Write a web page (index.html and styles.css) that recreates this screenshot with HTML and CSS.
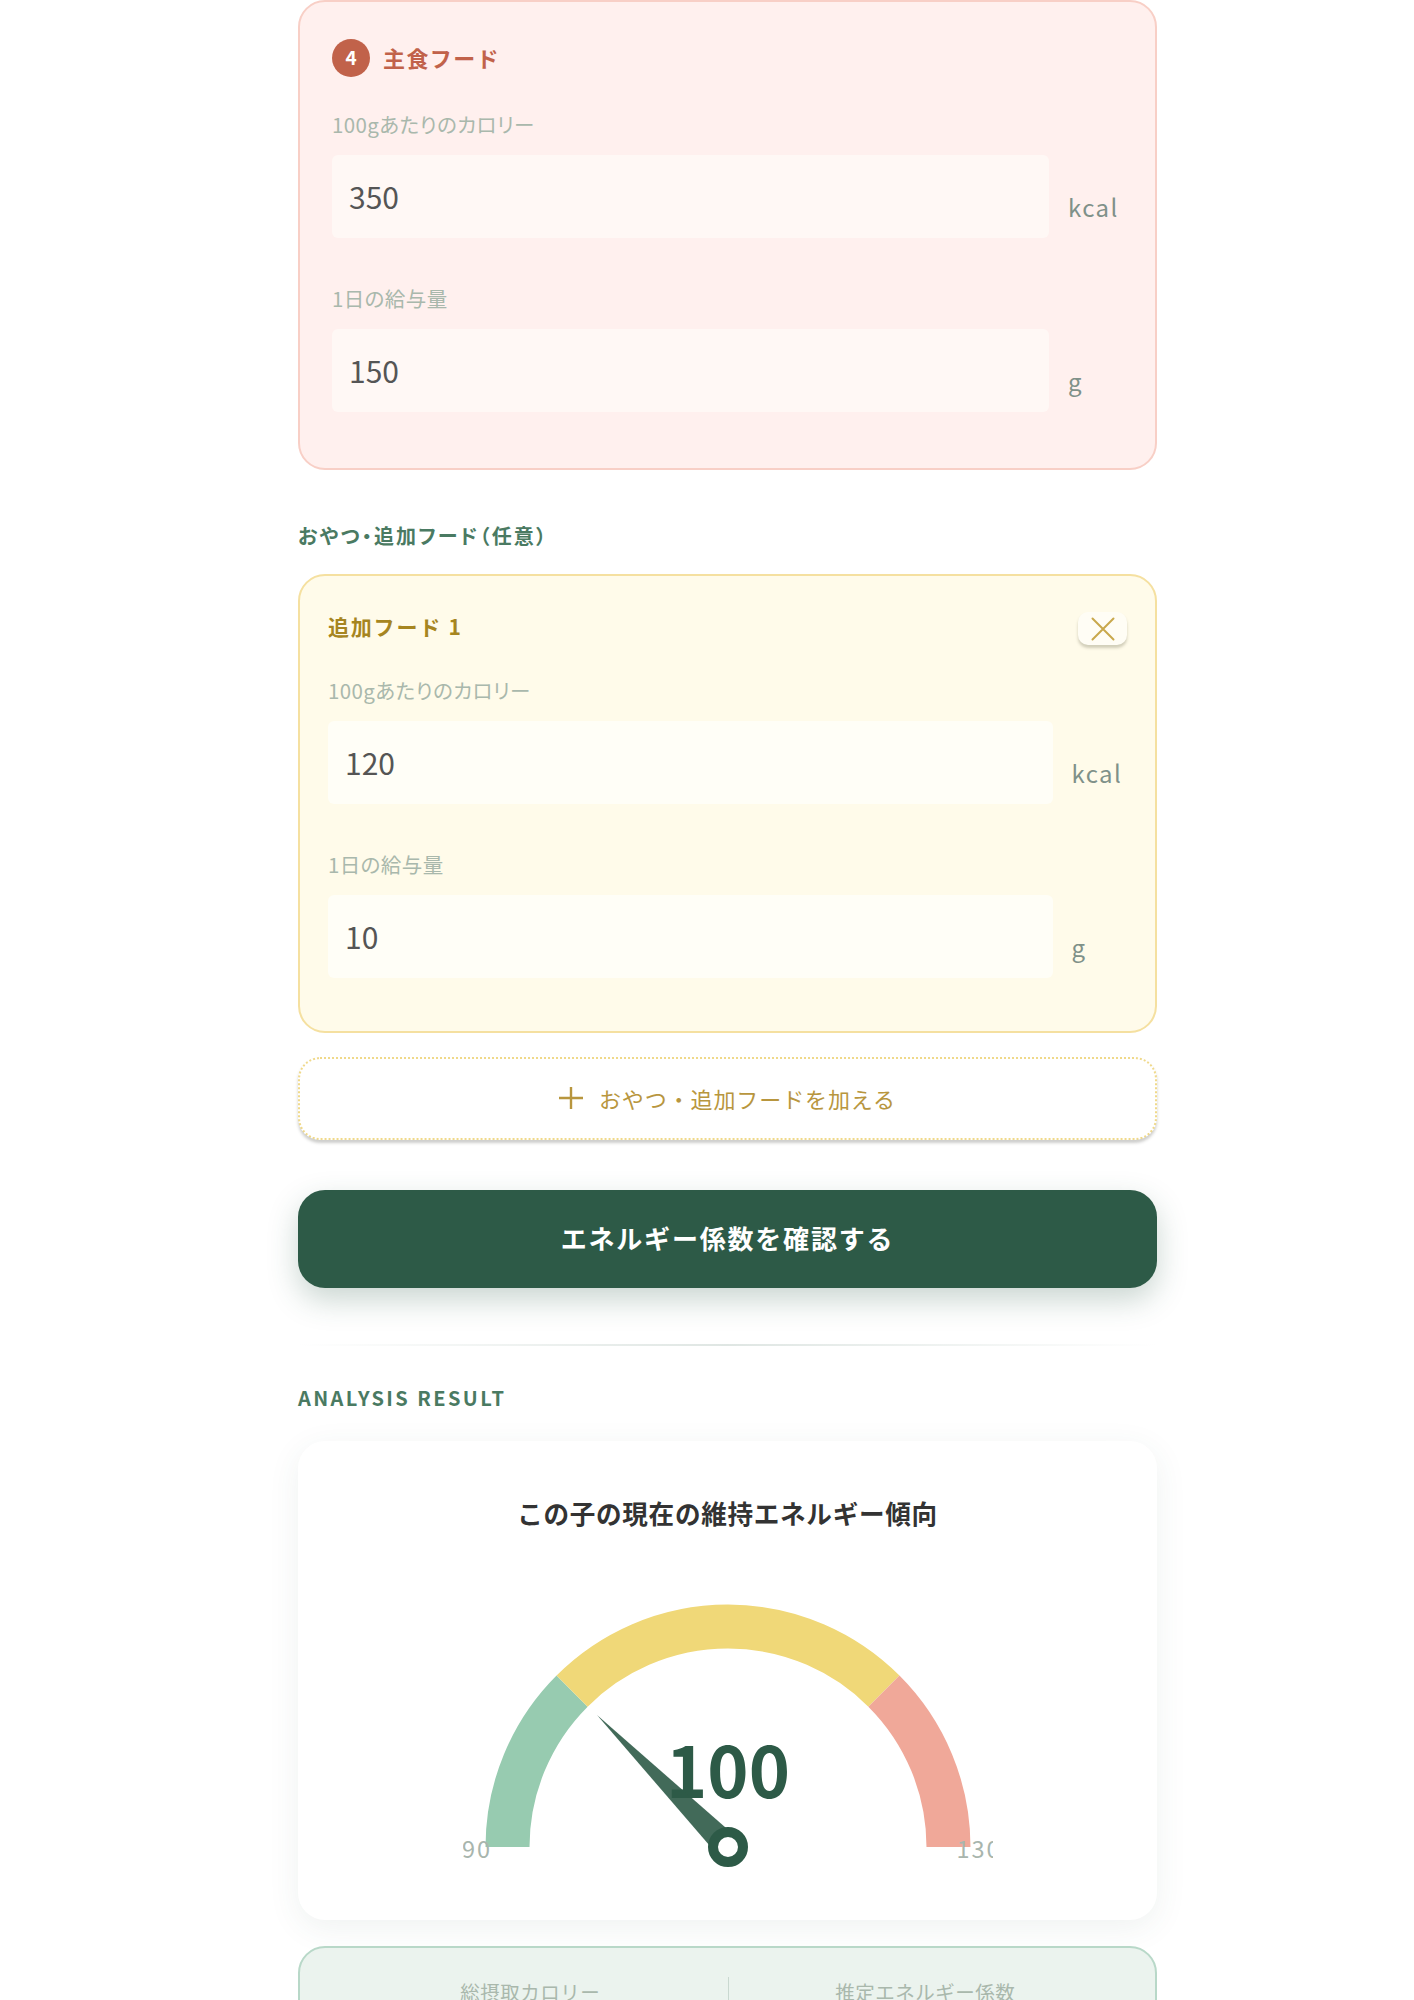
FILE: index.html
```html
<!DOCTYPE html>
<html lang="ja">
<head>
    <meta charset="UTF-8">
    <title>エネルギー係数</title>
    <link rel="stylesheet" href="styles.css">
</head>
<body>
    <div class="container">
        <div class="food-card food-main">
            <div class="card-head">
                <span class="badge">4</span>
                <h3 class="main-title">主食フード</h3>
            </div>
            <div class="field">
                <label class="field-label">100gあたりのカロリー</label>
                <div class="field-row">
                    <input class="field-input" type="number" value="350">
                    <span class="unit">kcal</span>
                </div>
            </div>
            <div class="field">
                <label class="field-label">1日の給与量</label>
                <div class="field-row">
                    <input class="field-input" type="number" value="150">
                    <span class="unit">g</span>
                </div>
            </div>
        </div>

        <h2 class="section-title">おやつ・追加フード（任意）</h2>

        <div class="food-card food-extra">
            <div class="card-head extra-head">
                <h3 class="extra-title">追加フード 1</h3>
                <button class="close-btn" type="button">
                    <svg width="24" height="24" viewBox="0 0 24 24" fill="none" stroke="#c9a84c" stroke-width="2" stroke-linecap="round">
                        <path d="M1.5 1.5 L22.5 22.5 M22.5 1.5 L1.5 22.5"/>
                    </svg>
                </button>
            </div>
            <div class="field">
                <label class="field-label">100gあたりのカロリー</label>
                <div class="field-row">
                    <input class="field-input" type="number" value="120">
                    <span class="unit">kcal</span>
                </div>
            </div>
            <div class="field">
                <label class="field-label">1日の給与量</label>
                <div class="field-row">
                    <input class="field-input" type="number" value="10">
                    <span class="unit">g</span>
                </div>
            </div>
        </div>

        <button class="add-btn" type="button">
            <svg width="24" height="24" viewBox="0 0 24 24" fill="none" stroke="#b8963e" stroke-width="2.4">
                <path d="M0 12 H24 M12 1 V23"/>
            </svg>
            <span>おやつ・追加フードを加える</span>
        </button>

        <button class="submit-btn" type="button">エネルギー係数を確認する</button>

        <div class="divider"></div>

        <h2 class="result-label">ANALYSIS RESULT</h2>

        <div class="result-card">
            <h3 class="result-title">この子の現在の維持エネルギー傾向</h3>
            <svg class="gauge" width="530" height="290" viewBox="0 0 530 290">
                <g fill="none" stroke-width="44">
                    <path stroke="#97cbb0" d="M44.5 257 A220.5 220.5 0 0 1 109.1 101.1"/>
                    <path stroke="#f0d878" d="M109.1 101.1 A220.5 220.5 0 0 1 420.9 101.1"/>
                    <path stroke="#f0a899" d="M420.9 101.1 A220.5 220.5 0 0 1 485.5 257"/>
                </g>
                <text class="gauge-min" x="14" y="268" text-anchor="middle">90</text>
                <text class="gauge-max" x="516" y="268" text-anchor="middle">130</text>
                <text class="gauge-value" x="265" y="208" text-anchor="middle">100</text>
                <path class="needle" d="M134 125 L274.2 247.8 L255.8 266.2 Z"/>
                <circle cx="265" cy="257" r="15" fill="#fff" stroke="#2d5a47" stroke-width="10"/>
            </svg>
        </div>

        <div class="stats">
            <div class="stat">総摂取カロリー</div>
            <div class="stat">推定エネルギー係数</div>
        </div>
    </div>
</body>
</html>
```
FILE: styles.css
```css
html, body {
    margin: 0;
    height: 2000px;
    overflow: hidden;
}

body {
    background: #fff;
    color: #333;
    font-family: "Noto Sans CJK JP", "Noto Sans", sans-serif;
}

h2, h3 {
    margin: 0;
}

button {
    font-family: inherit;
    cursor: pointer;
}

.container {
    width: 859px;
    margin-left: 298px;
}

.food-card {
    border: 2px solid;
    border-radius: 27px;
}

.food-main {
    padding: 37px 31.5px 56px 32px;
    background: #fff0ee;
    border-color: #f8cfc6;
}

.food-extra {
    padding: 36px 28px 52.5px 28px;
    background: #fffbea;
    border-color: #f5e0a0;
}

.card-head {
    display: flex;
    align-items: center;
    gap: 13px;
    height: 38px;
    margin-bottom: 33px;
}

.extra-head {
    justify-content: space-between;
    height: 33px;
    margin-bottom: 31px;
}

.badge {
    display: flex;
    align-items: center;
    justify-content: center;
    width: 38px;
    height: 38px;
    padding-bottom: 4px;
    box-sizing: border-box;
    border-radius: 50%;
    background: #c1624a;
    color: #fff;
    font-size: 19px;
    font-weight: 700;
}

.main-title {
    margin-bottom: 2px;
    color: #c1624a;
    font-size: 22px;
    font-weight: 700;
    letter-spacing: 1.4px;
}

.extra-title {
    margin-bottom: 5px;
    color: #a68520;
    font-size: 21px;
    font-weight: 700;
    letter-spacing: 1.8px;
}

.close-btn {
    display: flex;
    align-items: center;
    justify-content: center;
    width: 49px;
    height: 33px;
    padding: 0;
    border: none;
    border-radius: 10px;
    background: #fffdf5;
    box-shadow: 0 3px 3px rgba(70, 70, 40, 0.25);
}

.field + .field {
    margin-top: 46px;
}

.field-label {
    display: block;
    margin-bottom: 15.5px;
    color: #a9b8ac;
    font-size: 20.5px;
    line-height: 29px;
    letter-spacing: 0.4px;
    font-feature-settings: "palt";
}

.field-row {
    display: flex;
    align-items: flex-end;
    gap: 19px;
}

.field-input {
    flex: 1;
    min-width: 0;
    height: 83.5px;
    padding: 0 17px;
    box-sizing: border-box;
    border: none;
    border-radius: 6px;
    color: #555;
    font-family: inherit;
    font-size: 30px;
    appearance: textfield;
}

.food-main .field-input {
    background: #fff8f5;
}

.food-extra .field-input {
    background: #fffef7;
}

.unit {
    width: 55.5px;
    padding-bottom: 14.5px;
    color: #7f9189;
    font-size: 24px;
    line-height: 34px;
    letter-spacing: 1.4px;
}

.section-title {
    margin: 51px 0 24px;
    color: #4a7a62;
    font-size: 20px;
    font-weight: 700;
    line-height: 29px;
    letter-spacing: 2.2px;
    font-feature-settings: "palt";
}

.add-btn {
    display: flex;
    align-items: center;
    justify-content: center;
    gap: 16px;
    width: 100%;
    height: 83px;
    margin-top: 24.5px;
    padding-bottom: 3px;
    border: 2px dotted #f0d98a;
    border-radius: 22px;
    background: #fff;
    color: #b8963e;
    font-size: 22px;
    letter-spacing: 0.9px;
    box-shadow: 0 3px 3px rgba(60, 60, 50, 0.25);
}

.submit-btn {
    display: block;
    width: 100%;
    height: 98px;
    margin-top: 50px;
    padding-bottom: 4px;
    border: none;
    border-radius: 27px;
    background: #2d5a47;
    color: #fff;
    font-size: 26px;
    font-weight: 700;
    letter-spacing: 1.8px;
    box-shadow: 0 12px 30px rgba(45, 90, 71, 0.25);
}

.divider {
    height: 2px;
    margin-top: 56px;
    background: linear-gradient(90deg, transparent, #dfe6e3, transparent);
}

.result-label {
    margin: 36.5px 0 29px;
    color: #4a7a62;
    font-size: 20px;
    font-weight: 700;
    line-height: 29px;
    letter-spacing: 2.4px;
}

.result-card {
    height: 479.5px;
    padding-top: 54px;
    box-sizing: border-box;
    border-radius: 27px;
    background: #fff;
    text-align: center;
    box-shadow: 0 8px 32px rgba(45, 90, 71, 0.08);
}

.result-title {
    color: #333;
    font-size: 25.6px;
    font-weight: 700;
    line-height: 36px;
    letter-spacing: 0.7px;
}

.gauge {
    display: block;
    margin: 59.5px auto 0;
}

.gauge-min,
.gauge-max {
    fill: #a8b5ad;
    font-size: 23.5px;
    letter-spacing: 2px;
}

.gauge-value {
    fill: #2d5a47;
    font-size: 70px;
    font-weight: 700;
}

.needle {
    fill: #2d5a47;
    opacity: 0.9;
}

.stats {
    display: grid;
    grid-template-columns: 1fr 1fr;
    height: 200px;
    margin-top: 25.5px;
    padding: 29.5px 33px 0;
    box-sizing: border-box;
    border: 2px solid #b8d8c8;
    border-radius: 27px;
    background: #ebf3ee;
}

.stat {
    color: #a9b8ac;
    font-size: 19.5px;
    line-height: 29px;
    letter-spacing: 0.5px;
    text-align: center;
}

.stat + .stat {
    border-left: 1px solid #c9d8d0;
}
```
